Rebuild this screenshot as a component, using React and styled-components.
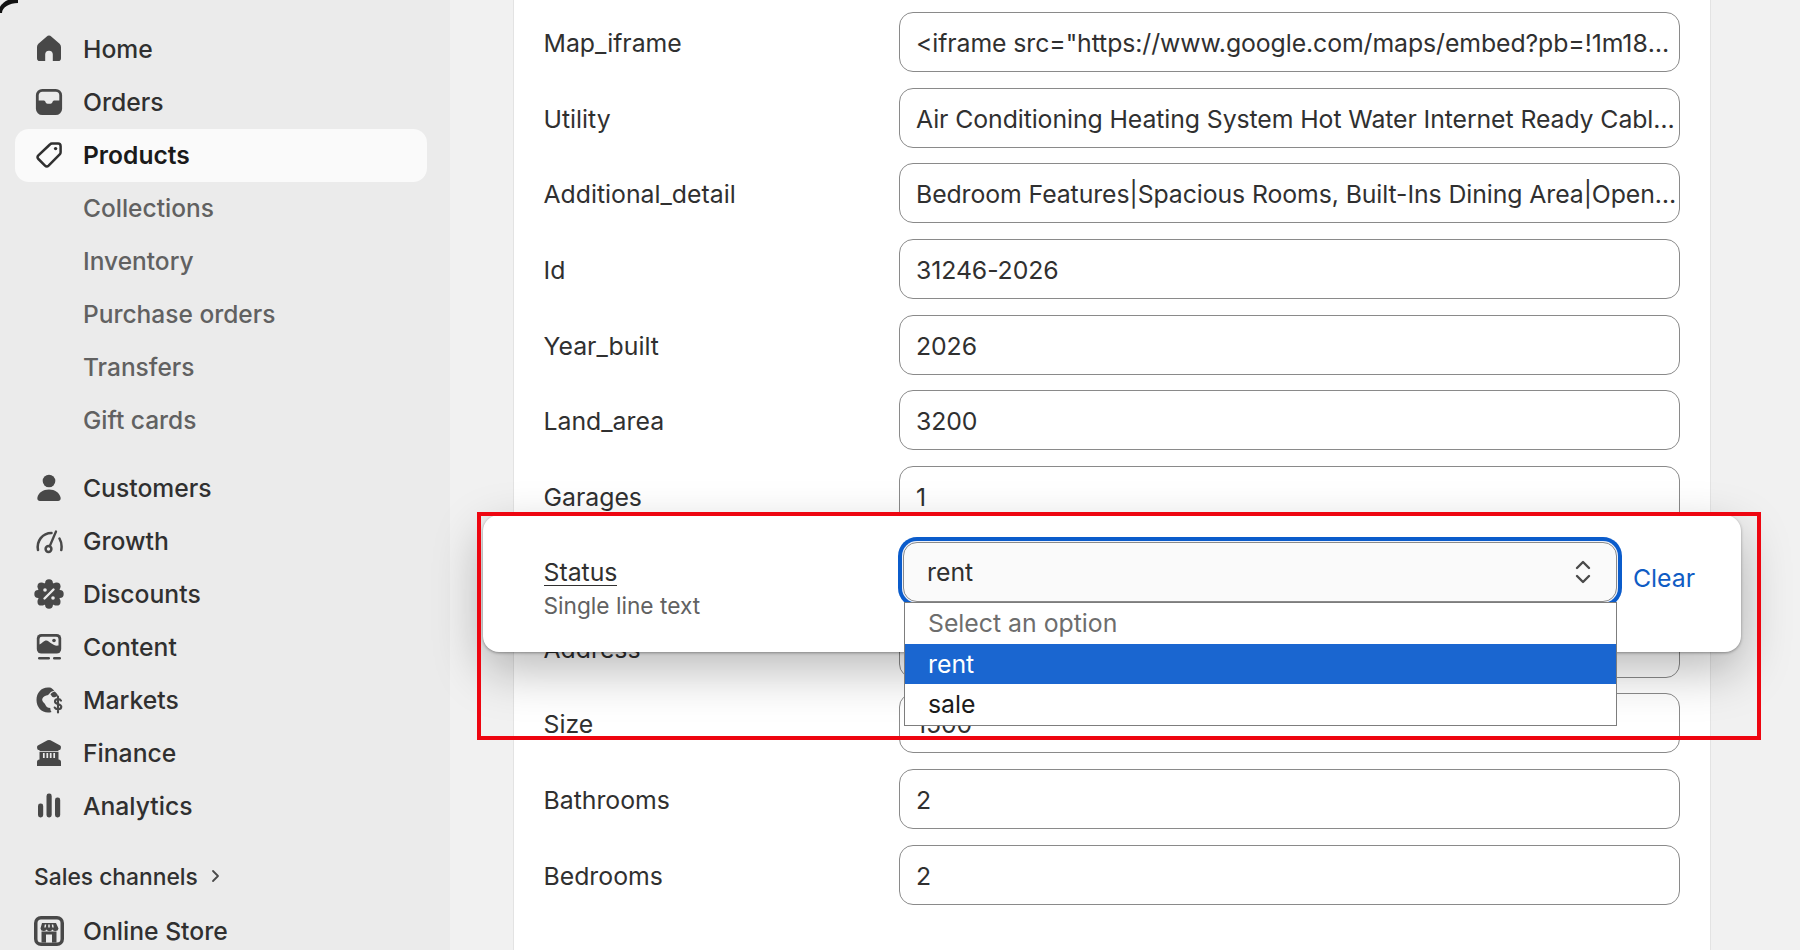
import React from "react";
import styled, { createGlobalStyle } from "styled-components";

const GlobalStyle = createGlobalStyle`
  html, body {
    margin: 0;
    padding: 0;
    background: #f1f1f1;
  }
  body {
    font-family: Inter, "Liberation Sans", sans-serif;
    color: #303030;
  }
  * {
    box-sizing: border-box;
  }
`;

const ICON_COLOR = "#484848";
const LIGHT = "#ebebeb";

const HomeIcon = () => (
  <svg width="28" height="28" viewBox="0 0 28 28" fill={ICON_COLOR}>
    <path d="M11.500 1.700 3.400 8.800A4.500 4.500 0 0 0 2 12v11.200A2.800 2.800 0 0 0 4.800 26h5.400v-6.500a3.800 3.800 0 0 1 7.600 0V26h5.400a2.800 2.800 0 0 0 2.800-2.800V12a4.500 4.500 0 0 0-1.400-3.200l-8.100-7.100a3.800 3.800 0 0 0-5 0z" />
  </svg>
);

const OrdersIcon = () => (
  <svg width="28" height="28" viewBox="0 0 28 28" fill={ICON_COLOR}>
    <rect x="2.300" y="2.300" width="23.400" height="23.400" rx="5" fill="none" stroke={ICON_COLOR} strokeWidth="2.800" />
    <path d="M2 12.500h6.500c1 0 1.600.5 2 1.500.4 1 1 1.700 2 1.700h3c1 0 1.600-.7 2-1.700.4-1 1-1.500 2-1.500H26v8.500a5 5 0 0 1-5 5H7a5 5 0 0 1-5-5z" />
  </svg>
);

const TagIcon = () => (
  <svg width="28" height="28" viewBox="0 0 28 28" fill="none" stroke="#303030" strokeWidth="2.500">
    <path d="M17 2.600h6a2.600 2.600 0 0 1 2.600 2.600v6a3 3 0 0 1-.9 2.100L13.600 24.600a2.600 2.600 0 0 1-3.600 0L3.400 18a2.600 2.600 0 0 1 0-3.600L14.900 3.500a3 3 0 0 1 2.100-.9z" />
    <circle cx="20.600" cy="7.600" r="1.700" fill="#303030" stroke="none" />
  </svg>
);

const CustomersIcon = () => (
  <svg width="28" height="28" viewBox="0 0 28 28" fill={ICON_COLOR}>
    <circle cx="14" cy="7" r="6.300" />
    <path d="M14 15.500c-6 0-10.400 3-11.600 8-.5 2 .8 3.500 2.600 3.500h18c1.800 0 3.100-1.500 2.600-3.500-1.200-5-5.600-8-11.600-8z" />
  </svg>
);

const GrowthIcon = () => (
  <svg width="28" height="28" viewBox="0 0 28 28" fill="none" stroke={ICON_COLOR} strokeWidth="2.500" strokeLinecap="round">
    <path d="M3 23C1.300 14 7.500 6 16.500 6" />
    <path d="M24.500 11.500c2 3.500 2.500 7.500 1.800 11.500" />
    <path d="M14.800 19 21 4.500" strokeWidth="2.300" />
    <circle cx="13.500" cy="22" r="2.900" />
  </svg>
);

const DiscountsIcon = () => {
  const lobes = Array.from({ length: 8 }, (_, i) => (i * Math.PI) / 4);
  return (
    <svg width="30" height="30" viewBox="0 0 30 30" fill={ICON_COLOR}>
      <circle cx="15" cy="15" r="11.500" />
      {lobes.map((a) => (
        <circle key={a} cx={15 + 10.800 * Math.cos(a)} cy={15 + 10.800 * Math.sin(a)} r="3.900" />
      ))}
      <path d="M10.500 19.500 19.500 10.500" stroke={LIGHT} strokeWidth="2.400" strokeLinecap="round" />
      <circle cx="11" cy="11" r="1.800" fill={LIGHT} />
      <circle cx="19" cy="19" r="1.800" fill={LIGHT} />
    </svg>
  );
};

const ContentIcon = () => (
  <svg width="28" height="28" viewBox="0 0 28 28" fill={ICON_COLOR}>
    <rect x="1.800" y="1" width="24.400" height="19.500" rx="4.500" />
    <path d="M4.500 11.500V6a2.300 2.300 0 0 1 2.300-2.300h14.400A2.300 2.300 0 0 1 23.500 6v6.500c-3 .5-5-.5-7-2-2.500-2-4-3.500-6-3-2 .5-3.500 3-6 4z" fill={LIGHT} />
    <circle cx="19" cy="7.500" r="1.800" fill={ICON_COLOR} />
    <rect x="3" y="24" width="12" height="2.400" rx="1.200" />
    <rect x="18" y="24" width="8" height="2.400" rx="1.200" />
  </svg>
);

const MarketsIcon = () => (
  <svg width="30" height="30" viewBox="0 0 30 30" fill={ICON_COLOR}>
    <path d="M14 2.500C7 2.500 2.500 8 2.500 15S7.500 27.500 14 27.500c1.200 0 2.500-.2 3.500-.6-.8-1-1.200-2.400-1.200-3.900-2.500 0-4-1-4.800-3-.6-1.800-2.300-2.500-3-4-.8-1.700 0-3.800 2-4.800 2.500-1.200 3.800-.8 5.200-3 .7-1 2-2 4.500-2.500-1-1.200-2.700-3.200-4.700-3.200z" />
    <path d="M20.500 6.500c-1.800.5-3.500 1.500-4 3 1 1 1.500 2.800 3 2.800s3.500-.8 4.500-1.800c-.8-1.600-2-3-3.500-4z" />
    <path d="M27 15.600c-.5-1-1.600-1.500-3-1.500-1.700 0-3 1-3 2.500 0 3.400 6.300 1.700 6.300 5.100 0 1.500-1.400 2.500-3.300 2.500-1.600 0-2.800-.6-3.300-1.700M24 11.500v16" fill="none" stroke={ICON_COLOR} strokeWidth="2.100" strokeLinecap="round" />
  </svg>
);

const FinanceIcon = () => (
  <svg width="28" height="28" viewBox="0 0 28 28" fill={ICON_COLOR}>
    <path d="M12.500 1.300 2.800 6.500C1.500 7.200 2 11 3.500 11h21c1.500 0 2-3.800.7-4.500L15.500 1.300a3.200 3.200 0 0 0-3 0z" />
    <path d="M4.500 11h19v10h-19z" />
    <path d="M2 23a2.500 2.500 0 0 1 2.500-2.500h19A2.500 2.500 0 0 1 26 23v4H2z" />
    <path d="M8.800 14v5M12.300 14v5M15.700 14v5M19.200 14v5" stroke={LIGHT} strokeWidth="1.700" />
    <path d="M3 12.500h22" stroke={LIGHT} strokeWidth="0.800" />
  </svg>
);

const AnalyticsIcon = () => (
  <svg width="28" height="28" viewBox="0 0 28 28" fill={ICON_COLOR}>
    <rect x="3" y="11.500" width="5.200" height="14" rx="2.400" />
    <rect x="11.500" y="1.500" width="5.200" height="24" rx="2.400" />
    <rect x="20" y="5.500" width="5.200" height="20" rx="2.400" />
  </svg>
);

const StoreIcon = () => (
  <svg width="32" height="32" viewBox="0 0 32 32" fill={ICON_COLOR}>
    <rect x="1" y="1" width="30" height="30" rx="7" />
    <rect x="4.500" y="4.500" width="23" height="23" rx="3.500" fill={LIGHT} />
    <path d="M9 8h14l2.500 5.500a3 3 0 0 1-3 2.500 3.200 3.200 0 0 1-3-1.500 3.500 3.500 0 0 1-6 0 3.200 3.200 0 0 1-3 1.500 3 3 0 0 1-3-2.500z" />
    <path d="M12.500 9.500 12 12.500M16 9.500v3M19.500 9.500 20 12.500" stroke={LIGHT} strokeWidth="1.500" />
    <path d="M8.500 16.500h15V27.500h-15z" />
    <path d="M13 19.500h6v8h-6z" fill={LIGHT} />
  </svg>
);

const MAIN_TOP = [
  { label: "Home", icon: <HomeIcon /> },
  { label: "Orders", icon: <OrdersIcon /> },
  { label: "Products", icon: <TagIcon />, active: true },
];
const PRODUCT_SUB = ["Collections", "Inventory", "Purchase orders", "Transfers", "Gift cards"];
const MAIN_BOTTOM = [
  { label: "Customers", icon: <CustomersIcon /> },
  { label: "Growth", icon: <GrowthIcon /> },
  { label: "Discounts", icon: <DiscountsIcon /> },
  { label: "Content", icon: <ContentIcon /> },
  { label: "Markets", icon: <MarketsIcon /> },
  { label: "Finance", icon: <FinanceIcon /> },
  { label: "Analytics", icon: <AnalyticsIcon /> },
];

// the Status row sits under the floating panel, so it stays empty here
const FIELDS = [
  { label: "Map_iframe", value: '<iframe src="https://www.google.com/maps/embed?pb=!1m18m12m3d3151' },
  { label: "Utility", value: "Air Conditioning Heating System Hot Water Internet Ready Cable Ready Laundry" },
  { label: "Additional_detail", value: "Bedroom Features|Spacious Rooms, Built-Ins Dining Area|Open Floor Plan Kitchen" },
  { label: "Id", value: "31246-2026" },
  { label: "Year_built", value: "2026" },
  { label: "Land_area", value: "3200" },
  { label: "Garages", value: "1" },
  { label: "", value: "" },
  { label: "Address", value: "" },
  { label: "Size", value: "1500" },
  { label: "Bathrooms", value: "2" },
  { label: "Bedrooms", value: "2" },
];

const App = () => (
  <>
    <GlobalStyle />
    <Page>
      <Sidebar>
        <CornerArc />
        <NavGroup>
          {MAIN_TOP.map((item) => (
            <NavItem key={item.label} $active={item.active}>
              <IconSlot>{item.icon}</IconSlot>
              {item.label}
            </NavItem>
          ))}
          {PRODUCT_SUB.map((label) => (
            <SubItem key={label}>{label}</SubItem>
          ))}
        </NavGroup>
        <NavGroup>
          {MAIN_BOTTOM.map((item) => (
            <NavItem key={item.label}>
              <IconSlot>{item.icon}</IconSlot>
              {item.label}
            </NavItem>
          ))}
        </NavGroup>
        <ChannelsHeading>
          Sales channels
          <svg width="10" height="14" viewBox="0 0 10 14" fill="none" stroke="#4a4a4a" strokeWidth="1.800" strokeLinecap="round" strokeLinejoin="round">
            <path d="M2 2l5 5-5 5" />
          </svg>
        </ChannelsHeading>
        <StoreItem>
          <IconSlot>
            <StoreIcon />
          </IconSlot>
          Online Store
        </StoreItem>
      </Sidebar>
      <Main>
        <Card>
          {FIELDS.map((field, i) => (
            <FieldRow key={i}>
              <FieldLabel>{field.label}</FieldLabel>
              <FieldInput>{field.value}</FieldInput>
            </FieldRow>
          ))}
        </Card>
      </Main>
      <StatusPanel>
        <StatusLabels>
          <StatusName>Status</StatusName>
          <StatusType>Single line text</StatusType>
        </StatusLabels>
        <SelectWrap>
          <SelectBox>
            rent
            <svg width="18" height="26" viewBox="0 0 18 26" fill="none" stroke="#4a4a4a" strokeWidth="2.400" strokeLinecap="round" strokeLinejoin="round">
              <path d="M3 9l6-6 6 6M3 17l6 6 6-6" />
            </svg>
          </SelectBox>
          <OptionList>
            <OptionItem $placeholder>Select an option</OptionItem>
            <OptionItem $selected>rent</OptionItem>
            <OptionItem>sale</OptionItem>
          </OptionList>
        </SelectWrap>
        <ClearLink>Clear</ClearLink>
      </StatusPanel>
      <Highlight />
    </Page>
  </>
);

const Page = styled.div`
  position: relative;
  display: flex;
  width: 1800px;
  height: 950px;
  overflow: hidden;
  background: #f1f1f1;
`;
const Sidebar = styled.nav`
  position: relative;
  flex: 0 0 450px;
  padding: 22.500px 23px 0 15px;
  background: #ebebeb;
`;
const CornerArc = styled.div`
  position: absolute;
  top: -2px;
  left: -2px;
  width: 20px;
  height: 15px;
  border-top: 5px solid #111;
  border-left: 4px solid #111;
  border-top-left-radius: 20px 15px;
`;
const NavGroup = styled.div`
  display: flex;
  flex-direction: column;
  margin-bottom: 14.500px;
`;
const NavItem = styled.div`
  display: flex;
  align-items: center;
  height: 53px;
  border-radius: 14px;
  font-size: ${(p) => (p.$active ? "24.600px" : "24.700px")};
  font-weight: ${(p) => (p.$active ? 600 : 500)};
  color: ${(p) => (p.$active ? "#1a1a1a" : "#303030")};
  background: ${(p) => (p.$active ? "#fafafa" : "transparent")};
`;
const StoreItem = styled(NavItem)`
  margin-top: 1.500px;
`;
const IconSlot = styled.span`
  display: flex;
  align-items: center;
  justify-content: center;
  flex: 0 0 68px;
`;
const SubItem = styled.div`
  display: flex;
  align-items: center;
  height: 53px;
  padding-left: 68px;
  font-size: 24.500px;
  font-weight: 450;
  color: #616161;
`;
const ChannelsHeading = styled.div`
  display: flex;
  align-items: center;
  gap: 13px;
  height: 53px;
  margin-top: 17.500px;
  padding-left: 19px;
  font-size: 22.800px;
  font-weight: 500;
  color: #303030;
`;
const Main = styled.main`
  flex: 1;
  padding: 0 89px 0 63px;
`;
const Card = styled.section`
  display: flex;
  flex-direction: column;
  gap: 15.700px;
  height: 100%;
  padding: 12px 30px 0 29.500px;
  background: #fff;
  border-left: 1px solid #e3e3e3;
  border-right: 1px solid #e3e3e3;
`;
const FieldRow = styled.div`
  display: grid;
  grid-template-columns: 355.500px 1fr;
  align-items: center;
  flex: 0 0 60px;
`;
const FieldLabel = styled.div`
  padding-top: 2px;
  font-size: 24.800px;
  color: #303030;
`;
const FieldInput = styled.div`
  height: 60px;
  padding: 0 2px 0 16px;
  border: 1px solid #8a8a8a;
  border-radius: 14px;
  background: #fff;
  font-size: 24.800px;
  letter-spacing: -0.080px;
  line-height: 60px;
  color: #303030;
  white-space: nowrap;
  overflow: hidden;
  text-overflow: ellipsis;
`;
const StatusPanel = styled.div`
  position: absolute;
  top: 515px;
  left: 483px;
  display: flex;
  width: 1258px;
  height: 137px;
  padding: 27px 0 0 60.500px;
  background: #fff;
  border-radius: 16px;
  box-shadow: 0 1px 3px rgba(0, 0, 0, 0.35), 0 18px 50px rgba(0, 0, 0, 0.28);
`;
const StatusLabels = styled.div`
  flex: 0 0 359.500px;
  padding-top: 14px;
`;
const StatusName = styled.div`
  width: fit-content;
  height: 30px;
  font-size: 24.800px;
  line-height: 32px;
  color: #303030;
  border-bottom: 1px solid #303030;
`;
const StatusType = styled.div`
  margin-top: 6px;
  font-size: 22.700px;
  line-height: 28px;
  color: #616161;
`;
const SelectWrap = styled.div`
  position: relative;
  flex: 0 0 714px;
  height: 60px;
`;
const SelectBox = styled.div`
  display: flex;
  align-items: center;
  justify-content: space-between;
  height: 60px;
  padding: 0 24px 0 23px;
  border: 1px solid #8a8a8a;
  border-radius: 14px;
  background: #fafafa;
  font-size: 24.800px;
  color: #303030;
  box-shadow: 0 0 0 1px #eef2fb, 0 0 0 5px #0b5ccb;
`;
const OptionList = styled.div`
  position: absolute;
  top: 60px;
  left: 1px;
  right: 0;
  border: 1px solid #7d7d7d;
  background: #fff;
`;
const OptionItem = styled.div`
  height: 40.500px;
  padding-left: 23px;
  font-size: 24.800px;
  line-height: 41.500px;
  color: ${(p) => (p.$selected ? "#fff" : p.$placeholder ? "#6d6d6d" : "#1a1a1a")};
  background: ${(p) => (p.$selected ? "#1a66d0" : "transparent")};
`;
const ClearLink = styled.div`
  margin: 20px 0 0 16px;
  font-size: 24.800px;
  line-height: 32px;
  color: #0f5cc4;
`;
const Highlight = styled.div`
  position: absolute;
  top: 512px;
  left: 477px;
  width: 1284px;
  height: 228px;
  border: 4px solid #ee0510;
  pointer-events: none;
`;

export default App;
